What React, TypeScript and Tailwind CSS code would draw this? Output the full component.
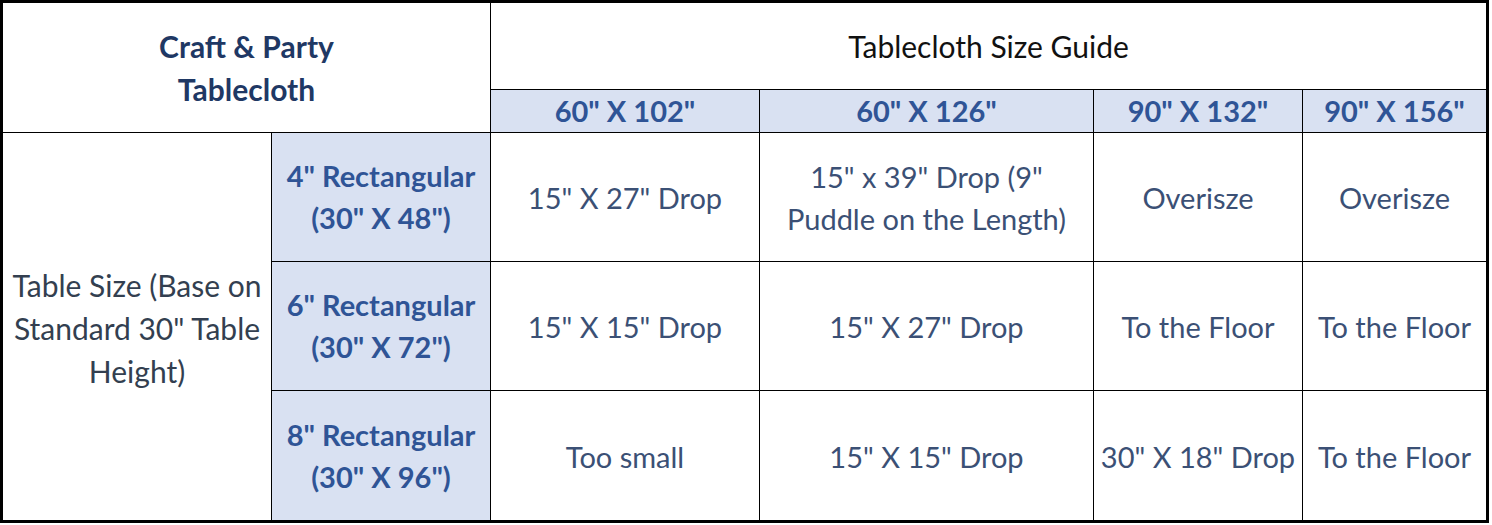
const sizes = ['60" X 102"', '60" X 126"', '90" X 132"', '90" X 156"'];

const rows = [
  {
    label: ['4" Rectangular', '(30" X 48")'],
    cells: ['15" X 27" Drop', '15" x 39" Drop (9" Puddle on the Length)', 'Overisze', 'Overisze'],
  },
  {
    label: ['6" Rectangular', '(30" X 72")'],
    cells: ['15" X 15" Drop', '15" X 27" Drop', 'To the Floor', 'To the Floor'],
  },
  {
    label: ['8" Rectangular', '(30" X 96")'],
    cells: ['Too small', '15" X 15" Drop', '30" X 18" Drop', 'To the Floor'],
  },
];

export default function App() {
  return (
    <div className="bg-white w-[1492px] h-[525px]" style={{ fontFamily: 'Lato, "Open Sans", sans-serif' }}>
      <div className="grid w-[1489px] bg-black p-[3px] gap-px grid-cols-[268px_218px_268px_333px_208px_183px] grid-rows-[86px_42px_128px_128px_129px]">
        {/* Header */}
        <div className="row-span-2 col-span-2 bg-white flex items-center justify-center text-center font-bold text-[30px] leading-[43px] text-[#1f3864]">
          <div>
            Craft &amp; Party
            <br />
            Tablecloth
          </div>
        </div>
        <div className="col-span-4 bg-white flex items-center justify-center text-[30px] text-[#111111]">
          Tablecloth Size Guide
        </div>
        {sizes.map((s) => (
          <div key={s} className="bg-[#d9e1f2] flex items-center justify-center font-bold text-[29px] text-[#2f5496]">
            {s}
          </div>
        ))}

        {/* Body */}
        <div className="row-span-3 bg-white flex items-center justify-center text-center text-[30px] leading-[43px] text-[#333f50] pt-1">
          Table Size (Base on Standard 30" Table Height)
        </div>
        {rows.map((r, i) => (
          <div key={i} className="contents">
            <div className="bg-[#d9e1f2] flex flex-col items-center justify-center font-bold text-[29px] leading-[42px] text-[#2f5496]">
              <span>{r.label[0]}</span>
              <span>{r.label[1]}</span>
            </div>
            {r.cells.map((c, j) => (
              <div
                key={j}
                className={`bg-white flex items-center justify-center text-center text-[29px] leading-[42px] text-[#3b5075] pt-0.5 ${j === 1 ? 'px-3' : 'px-0.5'}`}
              >
                {c}
              </div>
            ))}
          </div>
        ))}
      </div>
    </div>
  );
}
